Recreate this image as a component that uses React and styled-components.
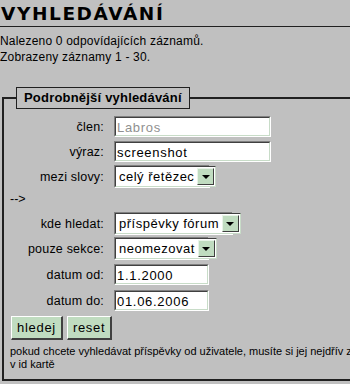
import styled, { createGlobalStyle } from "styled-components";

const Global = createGlobalStyle`
  body {
    margin: 0;
    background: #c0c0c0;
    font-family: "Liberation Sans", Arial, sans-serif;
    font-size: 12px;
    color: #000;
  }
`;

const Page = styled.div`
  width: 350px;
  height: 384px;
  overflow: hidden;
  background: #c0c0c0;
`;

const Title = styled.h1`
  margin: 0;
  padding: 2px 0 0 1px;
  height: 24px;
  font-family: "DejaVu Sans", Verdana, sans-serif;
  font-size: 18.5px;
  font-weight: bold;
  letter-spacing: 1.6px;
  line-height: 24px;
  border-bottom: 1px solid #202020;
`;

const Info = styled.p`
  margin: 6px 0 0 0;
  line-height: 16px;
  letter-spacing: 0.2px;
`;

const Fieldset = styled.fieldset`
  margin: 22px 0 0 2px;
  padding: 5px 0 0 6px;
  width: 400px;
  height: 294px;
  border: 2px solid #202020;
  box-sizing: border-box;
`;

const Legend = styled.legend`
  margin-left: 6px;
  padding: 2px 7px 3px 7px;
  border: 1px solid #202020;
  font-weight: bold;
  font-size: 13px;
  letter-spacing: 0.2px;
`;

const Row = styled.div`
  display: flex;
  align-items: center;
  height: ${(p) => p.h || 25}px;
`;

const Label = styled.label`
  width: 94px;
  text-align: right;
  padding-right: 10px;
  font-size: 12.5px;
  letter-spacing: 0.2px;
`;

const Inset = styled.div`
  box-sizing: border-box;
  width: ${(p) => p.w}px;
  height: ${(p) => p.h || 21}px;
  border-top: 1px solid #808080;
  border-left: 1px solid #808080;
  border-bottom: 1px solid #ffffff;
  border-right: 1px solid #ffffff;
  display: flex;
`;

const Field = styled.input`
  box-sizing: border-box;
  flex: 1;
  min-width: 0;
  margin: 0;
  padding: 1px 2px 0 1px;
  font-family: "Liberation Sans", Arial, sans-serif;
  font-size: 13px;
  letter-spacing: 0.7px;
  color: ${(p) => (p.disabled ? "#909090" : "#000")};
  background: #fff;
  border-top: 1px solid #404040;
  border-left: 1px solid #404040;
  border-bottom: 1px solid #c8dcc8;
  border-right: 1px solid #c8dcc8;
  outline: none;
`;

const SelectBox = styled.div`
  flex: 1;
  display: flex;
  align-items: center;
  justify-content: space-between;
  gap: 3px;
  background: #fff;
  border-top: 1px solid #404040;
  border-left: 1px solid #404040;
  border-bottom: 1px solid #c8dcc8;
  border-right: 1px solid #c8dcc8;
  padding: 1px 1px 1px 3px;
  font-size: 13px;
  letter-spacing: 0.5px;
  white-space: nowrap;
`;

const Arrow = styled.span`
  box-sizing: border-box;
  flex: none;
  width: 17px;
  height: 17px;
  background: #c0dcc0;
  border-top: 1px solid #e8f4e8;
  border-left: 1px solid #e8f4e8;
  border-bottom: 1px solid #404040;
  border-right: 1px solid #404040;
  display: flex;
  align-items: center;
  justify-content: center;
  &::after {
    content: "";
    border-left: 4px solid transparent;
    border-right: 4px solid transparent;
    border-top: 4px solid #000;
    margin-top: 1px;
  }
`;

const Note = styled.div`
  height: 22px;
  line-height: 20px;
  font-size: 12.5px;
`;

const Buttons = styled.div`
  display: flex;
  gap: 4px;
  margin: 3px 0 5px 1px;
`;

const Button = styled.button`
  height: 24px;
  padding: 0 5px;
  font-family: "Liberation Sans", Arial, sans-serif;
  font-size: 13px;
  letter-spacing: 0.7px;
  background: #c0dcc0;
  border-top: 1px solid #ffffff;
  border-left: 1px solid #ffffff;
  border-bottom: 2px solid #404040;
  border-right: 2px solid #404040;
  color: #000;
`;

const Help = styled.p`
  margin: 0;
  font-size: 11px;
  line-height: 13px;
  white-space: nowrap;
`;

const TextRow = ({ label, value, w, disabled, h }) => (
  <Row h={h}>
    <Label>{label}</Label>
    <Inset w={w}>
      <Field defaultValue={value} disabled={disabled} />
    </Inset>
  </Row>
);

const SelectRow = ({ label, value, w }) => (
  <Row>
    <Label>{label}</Label>
    <Inset w={w} h={23}>
      <SelectBox>
        {value}
        <Arrow />
      </SelectBox>
    </Inset>
  </Row>
);

export default function App() {
  return (
    <Page>
      <Global />
      <Title>VYHLEDÁVÁNÍ</Title>
      <Info>
        Nalezeno 0 odpovídajících záznamů.
        <br />
        Zobrazeny záznamy 1 - 30.
      </Info>
      <Fieldset>
        <Legend>Podrobnější vyhledávání</Legend>
        <TextRow label="člen:" value="Labros" w={157} disabled />
        <TextRow label="výraz:" value="screenshot" w={157} />
        <SelectRow label="mezi slovy:" value="celý řetězec" w={96} />
        <Note>--&gt;</Note>
        <SelectRow label="kde hledat:" value="příspěvky fórum" w={119} />
        <SelectRow label="pouze sekce:" value="neomezovat" w={95} />
        <TextRow label="datum od:" value="1.1.2000" w={95} h={27} />
        <TextRow label="datum do:" value="01.06.2006" w={95} />
        <Buttons>
          <Button>hledej</Button>
          <Button>reset</Button>
        </Buttons>
        <Help>
          pokud chcete vyhledávat příspěvky od uživatele, musíte si jej nejdřív zvolit
          <br />v id kartě
        </Help>
      </Fieldset>
    </Page>
  );
}
